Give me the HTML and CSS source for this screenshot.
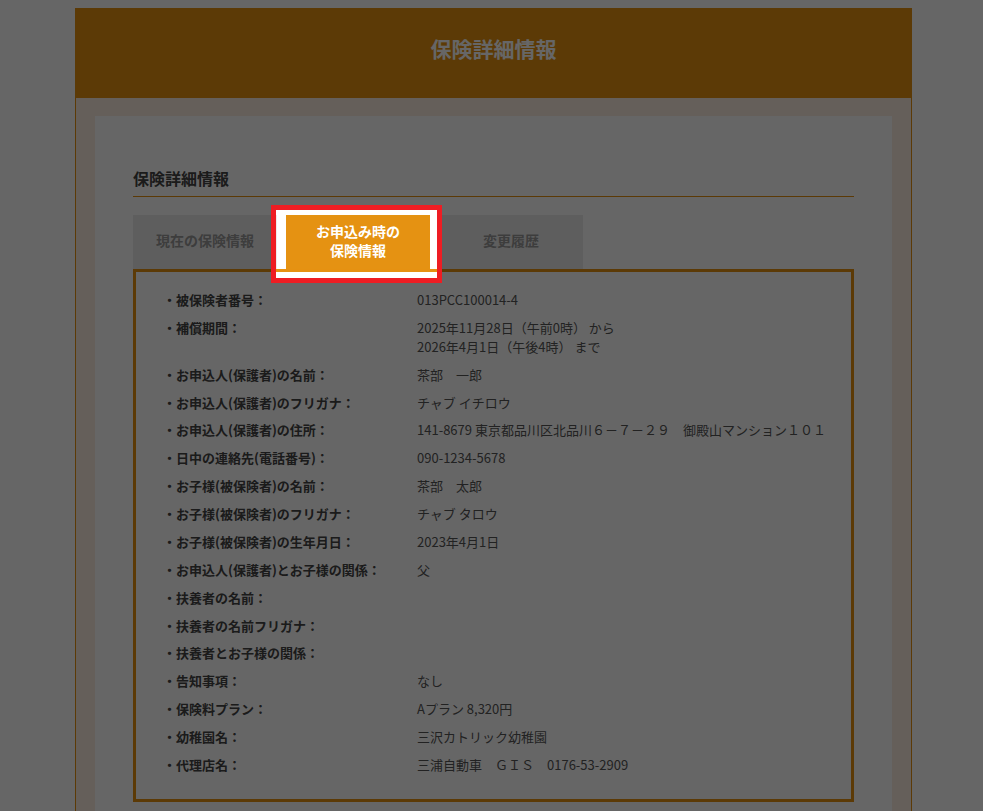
FILE: index.html
```html
<!DOCTYPE html>
<html lang="ja">
<head>
  <meta charset="UTF-8" />
  <meta name="viewport" content="width=device-width, initial-scale=1.0"/>
  <title>保険詳細情報</title>
  <link rel="stylesheet" href="styles.css">
</head>
<body>

<div class="page">
  <header class="page-head">
    <h1>保険詳細情報</h1>
  </header>

  <div class="page-body">
    <div class="card">
      <h2 class="section-title">保険詳細情報</h2>

      <div class="tabs">
        <div class="tab">現在の保険情報</div>
        <div class="tab tab-active">
          お申込み時の<br>保険情報
          <span class="spotlight"></span>
        </div>
        <div class="tab">変更履歴</div>
      </div>

      <div class="detail-box">
        <dl class="detail-list">
          <div class="detail-row"><dt>・被保険者番号：</dt><dd>013PCC100014-4</dd></div>
          <div class="detail-row"><dt>・補償期間：</dt><dd>2025年11月28日（午前0時） から<br>2026年4月1日（午後4時） まで</dd></div>
          <div class="detail-row"><dt>・お申込人(保護者)の名前：</dt><dd>茶部　一郎</dd></div>
          <div class="detail-row"><dt>・お申込人(保護者)のフリガナ：</dt><dd>チャブ イチロウ</dd></div>
          <div class="detail-row"><dt>・お申込人(保護者)の住所：</dt><dd>141-8679 東京都品川区北品川６－７－２９　御殿山マンション１０１</dd></div>
          <div class="detail-row"><dt>・日中の連絡先(電話番号)：</dt><dd>090-1234-5678</dd></div>
          <div class="detail-row"><dt>・お子様(被保険者)の名前：</dt><dd>茶部　太郎</dd></div>
          <div class="detail-row"><dt>・お子様(被保険者)のフリガナ：</dt><dd>チャブ タロウ</dd></div>
          <div class="detail-row"><dt>・お子様(被保険者)の生年月日：</dt><dd>2023年4月1日</dd></div>
          <div class="detail-row"><dt>・お申込人(保護者)とお子様の関係：</dt><dd>父</dd></div>
          <div class="detail-row"><dt>・扶養者の名前：</dt><dd></dd></div>
          <div class="detail-row"><dt>・扶養者の名前フリガナ：</dt><dd></dd></div>
          <div class="detail-row"><dt>・扶養者とお子様の関係：</dt><dd></dd></div>
          <div class="detail-row"><dt>・告知事項：</dt><dd>なし</dd></div>
          <div class="detail-row"><dt>・保険料プラン：</dt><dd>Aプラン 8,320円</dd></div>
          <div class="detail-row"><dt>・幼稚園名：</dt><dd>三沢カトリック幼稚園</dd></div>
          <div class="detail-row"><dt>・代理店名：</dt><dd>三浦自動車　ＧＩＳ　0176-53-2909</dd></div>
        </dl>
      </div>
    </div>
  </div>
</div>

</body>
</html>
```

FILE: styles.css
```css
* { box-sizing: border-box; }

html {
  overflow: hidden;
}

body {
  margin: 0;
  padding: 8px 6px 0 10px;
  font-family: "Noto Sans CJK JP", "Noto Sans", sans-serif;
  background: #fff;
  color: #444;
}

.page {
  width: 837px;
  margin: 0 auto;
  border: 1px solid #e69111;
  border-top: none;
}

.page-head {
  height: 90px;
  margin: 0 -1px;
  padding-top: 25px;
  background: #e69111;
  text-align: center;
}

.page-head h1 {
  margin: 0;
  font-size: 21px;
  line-height: 30px;
  font-weight: bold;
  color: #fff;
}

.page-body {
  background: #fdeee2;
  padding: 18px 19px 0;
}

.card {
  background: #fff;
  padding: 50px 38px 60px;
}

.section-title {
  margin: 0;
  padding-bottom: 6px;
  font-size: 16px;
  line-height: 24px;
  font-weight: bold;
  color: #444;
  border-bottom: 1px solid #e69111;
}

.tabs {
  display: flex;
  gap: 9px;
  width: 450px;
  margin-top: 18px;
}

.tab {
  flex: 1;
  height: 54px;
  padding-bottom: 3px;
  display: flex;
  align-items: center;
  justify-content: center;
  text-align: center;
  background: #ebebeb;
  color: #9a9a9a;
  font-size: 14px;
  line-height: 19px;
  font-weight: bold;
}

.tab-active {
  position: relative;
  background: #e59212;
  color: #fff;
}

/* tutorial spotlight: dims everything around the active tab */
.spotlight {
  position: absolute;
  top: -10px;
  left: -15px;
  right: -12px;
  bottom: -14px;
  z-index: 10;
  border: 5px solid #ee1d23;
  box-shadow: 0 0 0 3000px rgba(0, 0, 0, 0.6);
  pointer-events: none;
}

.detail-box {
  border: 3px solid #e69111;
  padding: 13.5px 0 21px 27px;
}

.detail-list {
  margin: 0;
}

.detail-row {
  display: grid;
  grid-template-columns: 254px 1fr;
  padding: 4.45px 0;
  font-size: 13px;
  line-height: 19px;
}

.detail-row dt {
  font-weight: bold;
  color: #444;
}

.detail-row dd {
  margin: 0;
  color: #555;
  white-space: nowrap;
}
```
